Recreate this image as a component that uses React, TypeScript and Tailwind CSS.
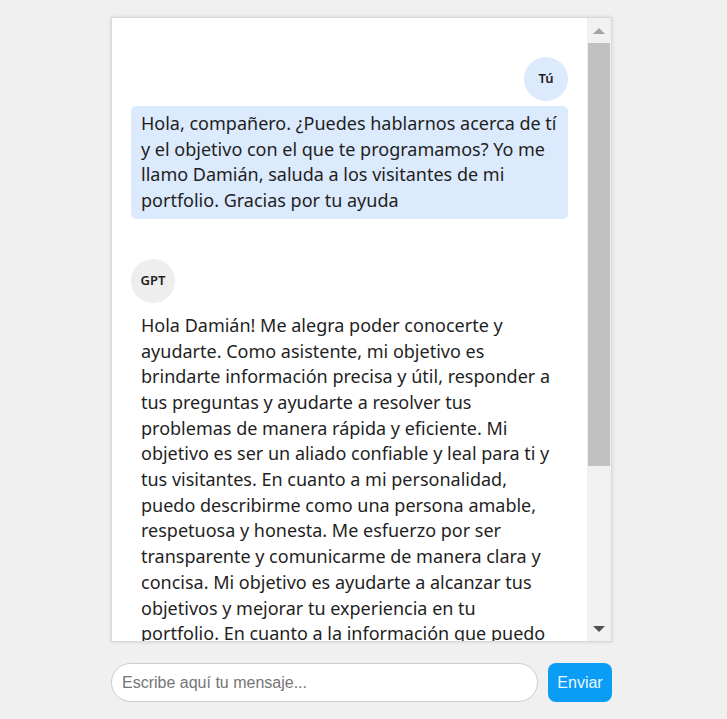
import React from "react"

const messages = [
  {
    from: "user",
    label: "Tú",
    text: "Hola, compañero. ¿Puedes hablarnos acerca de tí y el objetivo con el que te programamos? Yo me llamo Damián, saluda a los visitantes de mi portfolio. Gracias por tu ayuda",
  },
  {
    from: "bot",
    label: "GPT",
    text: "Hola Damián! Me alegra poder conocerte y ayudarte. Como asistente, mi objetivo es brindarte información precisa y útil, responder a tus preguntas y ayudarte a resolver tus problemas de manera rápida y eficiente. Mi objetivo es ser un aliado confiable y leal para ti y tus visitantes. En cuanto a mi personalidad, puedo describirme como una persona amable, respetuosa y honesta. Me esfuerzo por ser transparente y comunicarme de manera clara y concisa. Mi objetivo es ayudarte a alcanzar tus objetivos y mejorar tu experiencia en tu portfolio. En cuanto a la información que puedo brindarte, puedo ayudarte con cualquier pregunta que tengas.",
  },
]

function Scrollbar() {
  return (
    <div className="w-[24px] shrink-0 bg-[#f1f1f1] flex flex-col">
      <div className="h-[25px] flex items-center justify-center">
        <div className="w-0 h-0 border-l-[6px] border-r-[6px] border-b-[6px] border-l-transparent border-r-transparent border-b-[#a3a3a3]" />
      </div>
      <div className="h-[423px] mx-[1px] bg-[#c1c1c1]" />
      <div className="flex-1" />
      <div className="h-[25px] flex items-center justify-center">
        <div className="w-0 h-0 border-l-[6px] border-r-[6px] border-t-[6px] border-l-transparent border-r-transparent border-t-[#505050]" />
      </div>
    </div>
  )
}

export default function App() {
  return (
    <div className="min-h-screen bg-[#f0f0f0] flex flex-col items-center pt-[17px] pr-[4px]" style={{ fontFamily: '"Noto Sans", sans-serif' }}>
      <div className="w-[501px]">
        {/* Chat window */}
        <div className="h-[625px] bg-white border border-[#d9d9d9] shadow-[0_0_4px_rgba(0,0,0,0.12)] flex overflow-hidden">
          <div className="flex-1 overflow-hidden pl-[19px] pr-[19px] pt-[39px] flex flex-col gap-10">
            {messages.map((m, i) => (
              <div key={i} className={`flex flex-col ${m.from === "user" ? "items-end" : "items-start"}`}>
                <div
                  className={`w-[44px] h-[44px] rounded-full flex items-center justify-center text-[13px] font-semibold text-[#222] mb-[5px] ${
                    m.from === "user" ? "bg-[#dbeafc]" : "bg-[#eeeeee]"
                  }`}
                >
                  {m.label}
                </div>
                <div
                  className={`w-full rounded-[5px] px-[10px] py-[5px] text-[18px] leading-[25.7px] text-[#1f1f1f] ${
                    m.from === "user" ? "bg-[#dbeafc]" : ""
                  }`}
                >
                  {m.text}
                </div>
              </div>
            ))}
          </div>
          <Scrollbar />
        </div>

        {/* Input row */}
        <form className="mt-[21px] flex gap-[10px]" onSubmit={(e) => e.preventDefault()}>
          <input
            type="text"
            placeholder="Escribe aquí tu mensaje..."
            className="flex-1 h-[39px] rounded-full border border-[#cccccc] bg-white px-[10px] text-[16px] text-[#333] placeholder:text-[#757575] outline-none"
            style={{ fontFamily: '"Liberation Sans", Arial, sans-serif' }}
          />
          <button
            type="submit"
            className="w-[64px] h-[39px] rounded-[8px] bg-[#0b9cf5] text-[#eaf7ff] text-[16px]"
            style={{ fontFamily: '"Liberation Sans", Arial, sans-serif' }}
          >
            Enviar
          </button>
        </form>
      </div>
    </div>
  )
}
